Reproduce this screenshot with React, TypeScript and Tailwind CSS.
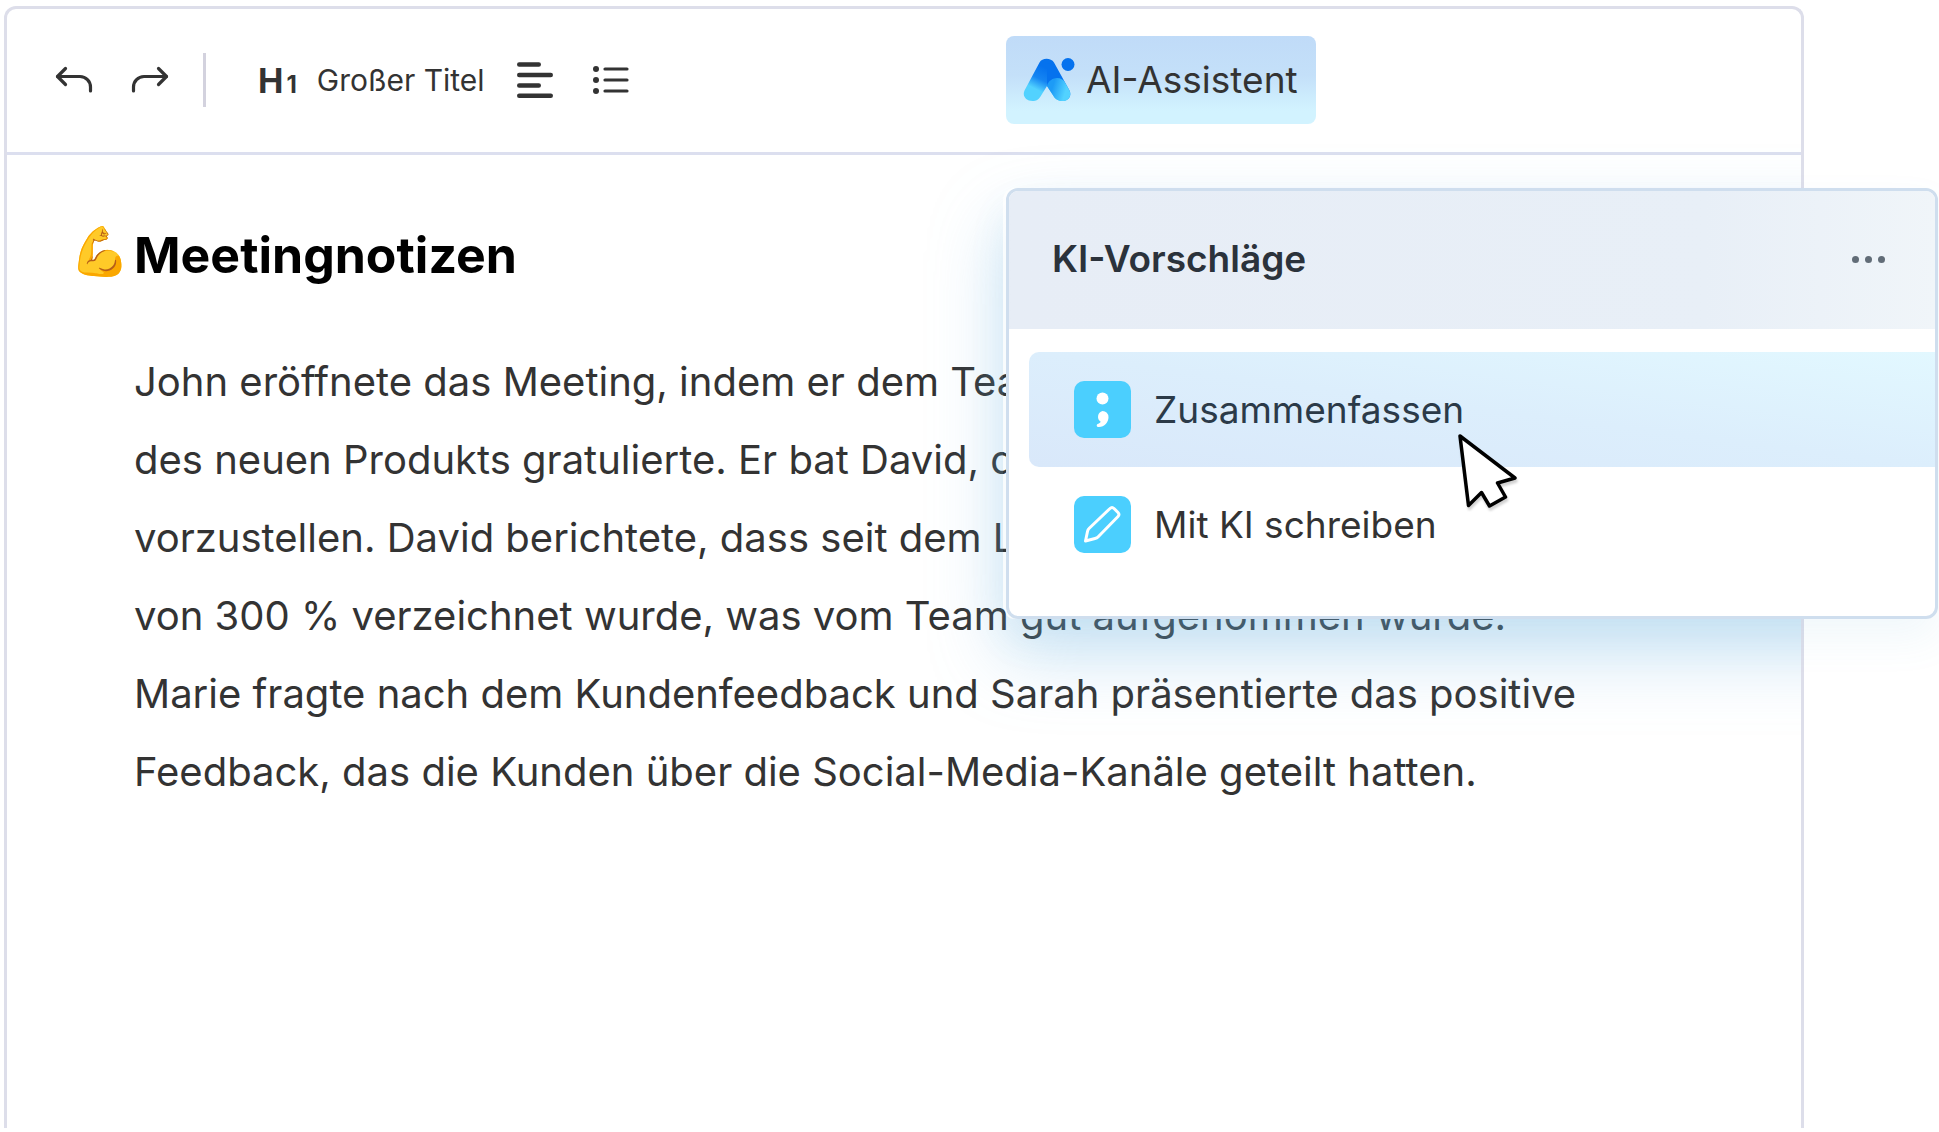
const lines = [
  'John eröffnete das Meeting, indem er dem Team',
  'des neuen Produkts gratulierte. Er bat David, die',
  'vorzustellen. David berichtete, dass seit dem La',
  'von 300 % verzeichnet wurde, was vom Team gut aufgenommen wurde.',
  'Marie fragte nach dem Kundenfeedback und Sarah präsentierte das positive',
  'Feedback, das die Kunden über die Social-Media-Kanäle geteilt hatten.',
];

function UndoIcon({ className }: { className?: string }) {
  return (
    <svg
      viewBox="0 0 38 28"
      className={`h-7 w-[38px] ${className ?? ''}`}
      fill="none"
      stroke="currentColor"
      strokeWidth="3.2"
      strokeLinecap="round"
      strokeLinejoin="round"
      aria-hidden="true"
    >
      <path d="M10.5 2.5 2.5 10.5l8 8" />
      <path d="M2.5 10.5H25a10.5 10.5 0 0 1 10.5 10.5v4" />
    </svg>
  );
}

function AlignLeftIcon() {
  return (
    <svg viewBox="0 0 36 36" className="size-9" stroke="currentColor" strokeWidth="4.4" strokeLinecap="round" aria-hidden="true">
      <path d="M2.2 2.5h19.6M2.2 13h31.6M2.2 23.5h19.6M2.2 33.8h31.6" />
    </svg>
  );
}

function BulletListIcon() {
  return (
    <svg viewBox="0 0 36 30" className="h-[30px] w-9" stroke="currentColor" strokeWidth="3.2" strokeLinecap="round" aria-hidden="true">
      <path d="M12 4h22M12 15h22M12 26h22" />
      <g fill="currentColor" stroke="none">
        <circle cx="3" cy="4" r="3" />
        <circle cx="3" cy="15" r="3" />
        <circle cx="3" cy="26" r="3" />
      </g>
    </svg>
  );
}

function AssistantLogo() {
  return (
    <svg viewBox="0 0 52 46" className="h-[46px] w-[52px]" fill="none" aria-hidden="true">
      <defs>
        <linearGradient id="leg-left" x1="24" y1="8" x2="10" y2="36" gradientUnits="userSpaceOnUse">
          <stop offset="0.1" stopColor="#0572ee" />
          <stop offset="0.5" stopColor="#1585f2" />
          <stop offset="0.85" stopColor="#52d2ff" />
        </linearGradient>
        <linearGradient id="leg-right" x1="29" y1="32" x2="42" y2="36" gradientUnits="userSpaceOnUse">
          <stop offset="0" stopColor="#1d9bf6" />
          <stop offset="1" stopColor="#52d2ff" />
        </linearGradient>
      </defs>
      <path
        d="M16.5 5.5C19 .5 28 .5 31 5.5l15.5 28c2.5 5-1 10.5-6.5 10.5-5 0-7.5-1.5-9.5-5L24 29l-6.5 10.5C15 43 13.5 44 9.500 44 3 44-1 39 1.500 33.500z"
        fill="url(#leg-left)"
      />
      <path d="M24 29c1-5 5.500-8 10-8 3.500 0 6.500 1.500 8 4.500l4.500 8c2.500 5-1 10.500-6.500 10.500-5 0-7.500-1.500-9.500-5z" fill="url(#leg-right)" />
      <path d="M24 6c5 0 8 5 10 9l3 6c-6-1-12 2-13 8z" fill="#0572ee" />
      <circle cx="45" cy="7.500" r="6.500" fill="#0572ee" />
    </svg>
  );
}

function SemicolonIcon() {
  return (
    <svg viewBox="0 0 57 57" className="size-[57px]" fill="#fff" aria-hidden="true">
      <circle cx="28.500" cy="17.500" r="6" />
      <path d="M28.500 30a6 6 0 0 1 6 6.200c0 5-4 9.600-9.600 9.800-2.600 0-2.900-2.600-.6-3.300 1.400-.5 2.100-1.200 2.400-1.900A6 6 0 0 1 28.500 30z" />
    </svg>
  );
}

function PencilIcon() {
  return (
    <svg
      viewBox="0 0 57 57"
      className="size-[57px]"
      fill="none"
      stroke="#fff"
      strokeWidth="3"
      strokeLinecap="round"
      strokeLinejoin="round"
      aria-hidden="true"
    >
      <path d="M36 12.500q2-2 4 0l4 4q2 2 0 4L24 41q-1 1-3 1.500L11.500 45l2-9.500q.4-2 1.500-3z" />
    </svg>
  );
}

const suggestions = [
  { label: 'Zusammenfassen', icon: <SemicolonIcon />, active: true },
  { label: 'Mit KI schreiben', icon: <PencilIcon />, active: false },
];

function Toolbar() {
  return (
    <header className="flex h-[146px] items-center border-b-3 border-[#dcdfef] pb-px">
      <div className="flex flex-1 items-center pl-12">
        <button type="button" aria-label="Rückgängig">
          <UndoIcon />
        </button>
        <button type="button" aria-label="Wiederholen" className="ml-[38px]">
          <UndoIcon className="-scale-x-100" />
        </button>
        <span className="ml-[34px] h-[54px] w-[3px] bg-[#d3d2de]" />
        <button type="button" className="ml-[52px] flex items-center gap-5">
          <span className="flex items-baseline gap-[3px] font-bold">
            <span className="text-[34px]">H</span>
            <span className="text-2xl">1</span>
          </span>
          <span className="text-[30px]">Großer Titel</span>
        </button>
        <button type="button" aria-label="Linksbündig" className="ml-8">
          <AlignLeftIcon />
        </button>
        <button type="button" aria-label="Aufzählung" className="ml-10">
          <BulletListIcon />
        </button>
      </div>
      <div className="w-[795px]">
        <button
          type="button"
          className="flex h-[88px] w-[310px] items-center gap-[11px] rounded-lg bg-linear-to-b from-[#c0dbf8] via-[#c4e0f9] via-45% to-[#d2f3ff] to-85% pl-[17px] text-[37px]"
        >
          <AssistantLogo />
          AI-Assistent
        </button>
      </div>
    </header>
  );
}

function SuggestionPanel() {
  return (
    <section
      aria-label="KI-Vorschläge"
      className="absolute top-[188px] right-px w-[932px] overflow-hidden rounded-xl border-3 border-[#cfdeee] bg-white pb-[34px]"
    >
      <div className="flex h-[138px] items-center justify-between bg-linear-to-r from-[#e7edf6] via-[#e8eff7] via-75% to-[#f0f5f9] pr-[50px] pb-0.5 pl-[43px]">
        <h2 className="text-[37px] font-semibold text-[#2b323b]">KI-Vorschläge</h2>
        <button type="button" aria-label="Mehr" className="flex gap-[6px]">
          <span className="size-[7px] rounded-full bg-[#616c77]" />
          <span className="size-[7px] rounded-full bg-[#616c77]" />
          <span className="size-[7px] rounded-full bg-[#616c77]" />
        </button>
      </div>
      <ul className="pt-[23px] pl-5">
        {suggestions.map((s) => (
          <li key={s.label}>
            <button
              type="button"
              className={`flex h-[115px] w-full items-center gap-[23px] rounded-l-[10px] pl-[45px] text-[37px] ${
                s.active ? 'bg-linear-to-tr from-[#d9e8fa] via-[#dceefc] to-[#e2f8ff] text-[#2b3a48]' : ''
              }`}
            >
              <span className="rounded-[10px] bg-[#4bcffe]">{s.icon}</span>
              {s.label}
            </button>
          </li>
        ))}
      </ul>
    </section>
  );
}

function Pointer() {
  return (
    <svg
      viewBox="0 0 62 78"
      className="absolute top-[432px] right-[421px] h-[78px] w-[62px] drop-shadow-[1px_3px_1px_rgba(0,0,0,0.18)]"
      aria-hidden="true"
    >
      <path
        d="M4 4 59 46 41.500 51 49.500 65 33.500 74 25.500 60.500 12.500 73.500z"
        fill="#fff"
        stroke="#000"
        strokeWidth="3.500"
        strokeLinejoin="round"
      />
    </svg>
  );
}

export default function App() {
  return (
    <div className="relative flex min-h-screen flex-col overflow-hidden bg-white pt-1.5 pr-[135px] pb-1 pl-1 font-['Inter',sans-serif] text-[#333]">
      <main className="relative flex flex-1 flex-col overflow-hidden rounded-t-xl border-3 border-b-0 border-[#dddeea]">
        <Toolbar />
        <article className="px-[63px] pt-16">
          <h1 className="flex items-center text-[50px] leading-16 font-bold text-black">
            <span className="w-16 pb-2 text-[48px] font-normal">💪</span>
            Meetingnotizen
          </h1>
          <p className="mt-[52px] pl-16 text-[40px] leading-[78px] whitespace-nowrap">
            {lines.map((line) => (
              <span key={line} className="block">
                {line}
              </span>
            ))}
          </p>
        </article>
        {/* glow of the popover, cut off at the sheet's edge */}
        <div className="pointer-events-none absolute top-[179px] -right-[134px] h-[431px] w-[932px] rounded-xl shadow-[0_36px_72px_rgba(110,180,228,0.36)]" />
      </main>
      <div className="pointer-events-none absolute top-[188px] right-px h-[431px] w-[932px] rounded-xl shadow-[0_20px_40px_rgba(80,160,200,0.08)]" />
      <SuggestionPanel />
      <Pointer />
    </div>
  );
}
